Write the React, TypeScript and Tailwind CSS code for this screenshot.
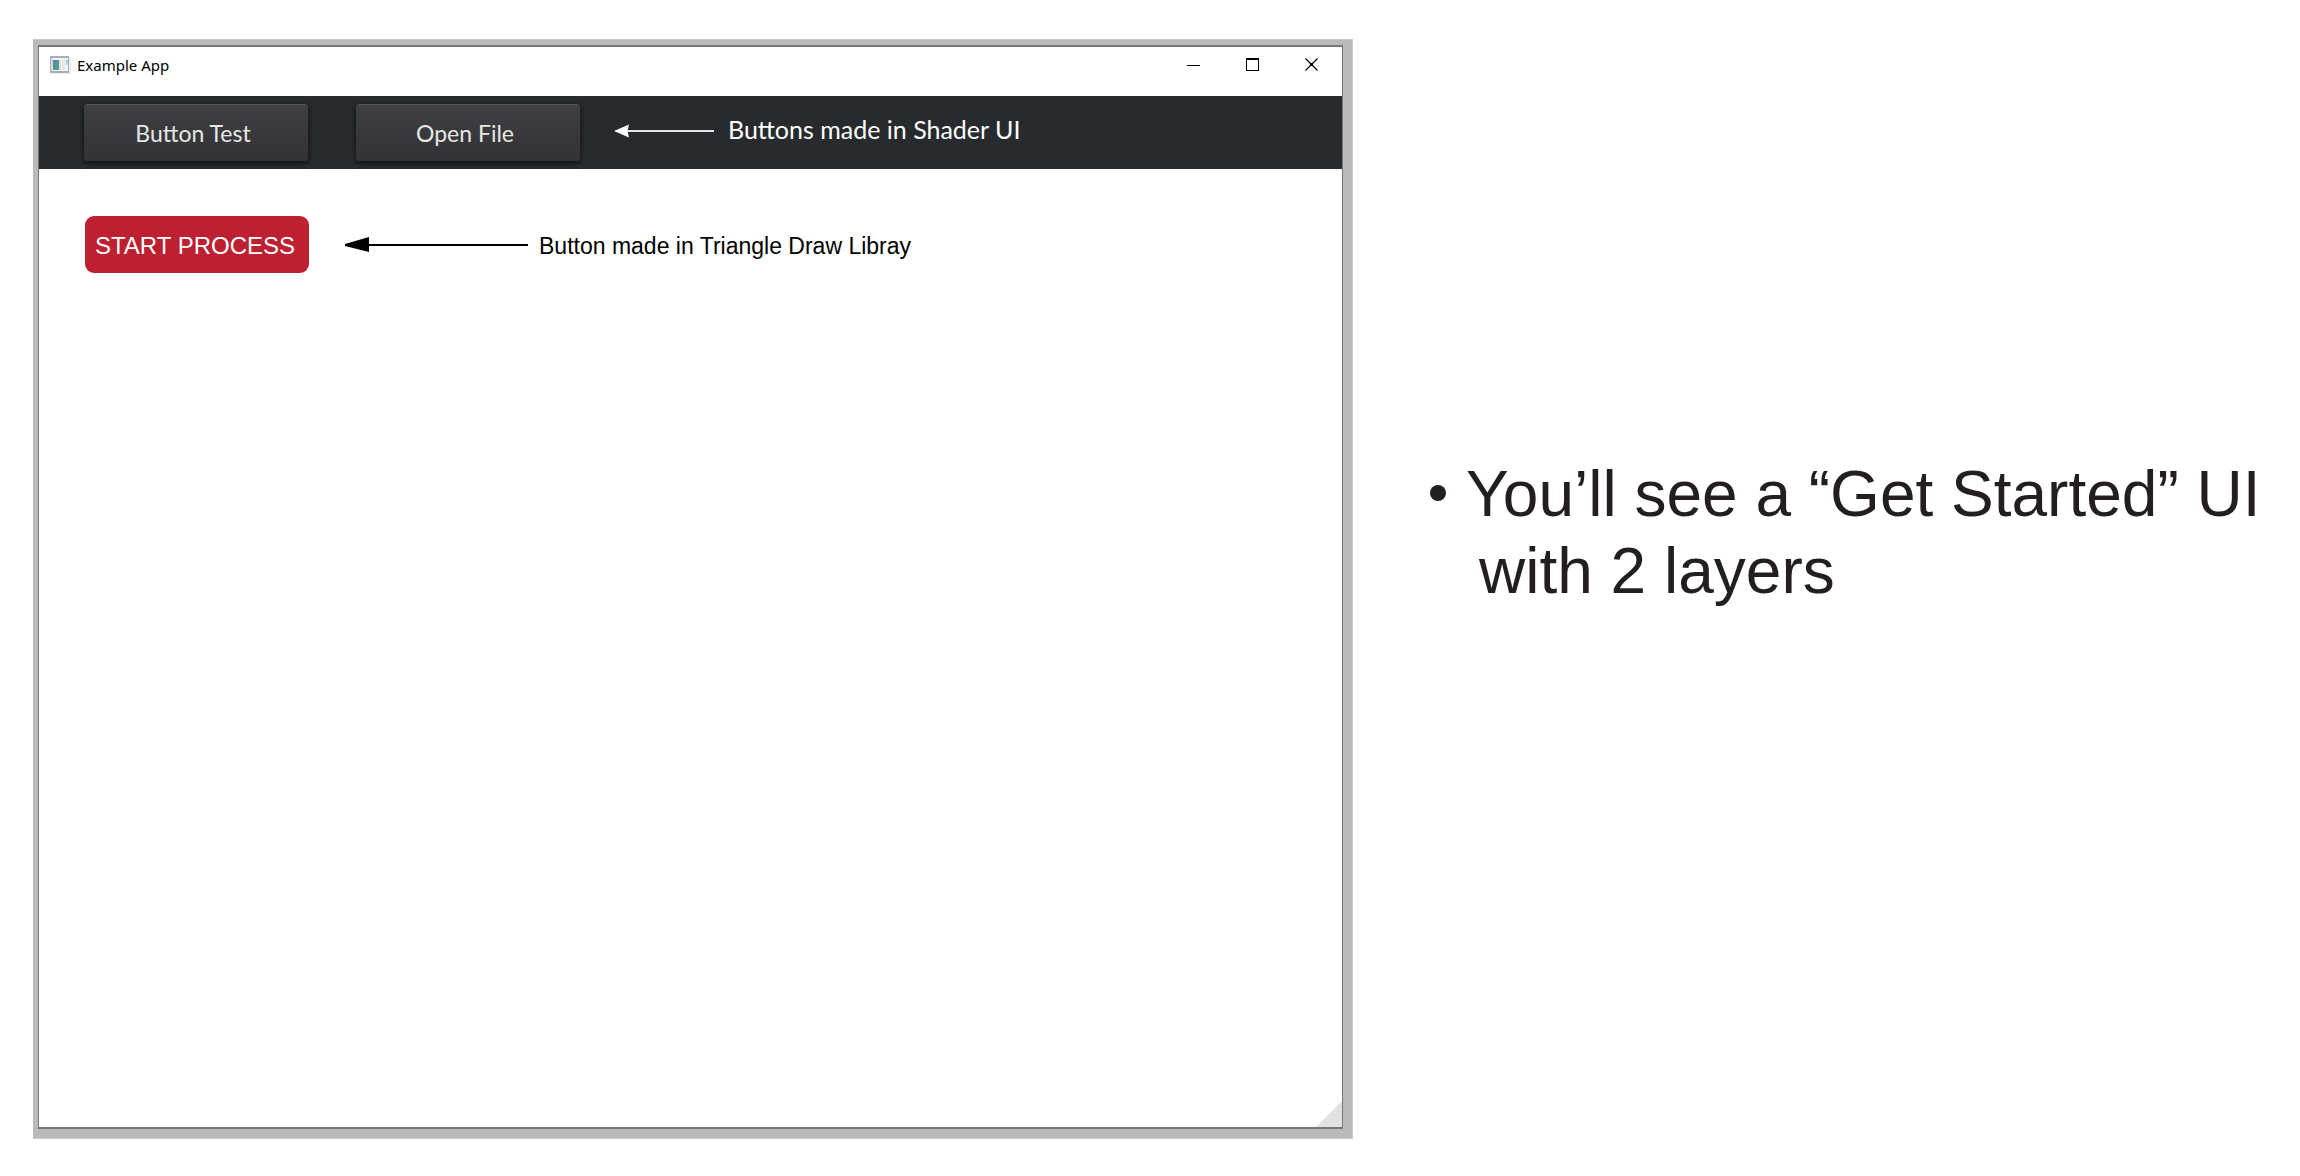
import React from "react";

function AppIcon() {
  return (
    <svg width="21" height="18" viewBox="0 0 21 18" aria-hidden="true">
      <defs>
        <linearGradient id="pane" x1="0" y1="0" x2="1" y2="1">
          <stop offset="0" stopColor="#5b7fb0" />
          <stop offset="1" stopColor="#4fae7c" />
        </linearGradient>
        <linearGradient id="side" x1="0" y1="0" x2="1" y2="1">
          <stop offset="0" stopColor="#7db8a0" />
          <stop offset="1" stopColor="#e4eaf2" />
        </linearGradient>
      </defs>
      <rect x="1" y="1" width="20" height="17" fill="#ececec" />
      <rect x="0" y="0" width="19" height="17" fill="#a9adb5" />
      <rect x="1" y="2" width="17" height="13" fill="#f3f4f6" />
      <rect x="1" y="2" width="2" height="13" fill="#d5dcea" />
      <rect x="3" y="4" width="6" height="10" fill="url(#pane)" />
      <rect x="9" y="4" width="2" height="10" fill="#d8e6e2" />
      <rect x="12" y="4" width="3" height="10" fill="#e6e6e6" />
      <rect x="16" y="4" width="2" height="5" fill="url(#side)" />
    </svg>
  );
}

function TitleBar() {
  return (
    <header className="flex h-[49px] items-start justify-between pl-[11px] pr-6 pt-2">
      <div className="flex items-center gap-1.5">
        <AppIcon />
        <h1 className="font-['Noto_Sans',sans-serif] text-[15px] leading-5 text-black">Example App</h1>
      </div>
      <div className="flex items-center gap-[46px] pt-[3px]">
        <button type="button" aria-label="Minimize" className="block">
          <svg width="13" height="13" viewBox="0 0 13 13">
            <rect y="7" width="13" height="1" fill="#000" />
          </svg>
        </button>
        <button type="button" aria-label="Maximize" className="block">
          <svg width="13" height="13" viewBox="0 0 13 13">
            <path d="M0 0H13V13H0ZM1 2V12H12V2Z" fill="#000" fillRule="evenodd" />
          </svg>
        </button>
        <button type="button" aria-label="Close" className="block">
          <svg width="13" height="13" viewBox="0 0 13 13">
            <path d="M0.5 0.5L12.5 12.5M12.5 0.5L0.5 12.5" stroke="#000" strokeWidth="1.2" />
            <rect x="5" y="5" width="3" height="3" fill="#000" />
          </svg>
        </button>
      </div>
    </header>
  );
}

function ShaderButton({ children }: { children: React.ReactNode }) {
  return (
    <button
      type="button"
      className="h-[57px] w-56 shrink-0 rounded border-t border-[#54565b] bg-linear-to-b from-[#3f4044] to-[#333236] pr-1.5 font-['Lato',sans-serif] text-[23px] text-[#e6e8e2] shadow-[0_2px_5px_1px_rgba(0,0,0,0.55)]"
    >
      {children}
    </button>
  );
}

export default function App() {
  return (
    <main className="grid min-h-screen grid-cols-[1320fr_947fr] bg-white pb-[37px] pl-[33px] pt-[39px]">
      <section className="flex border-t border-r border-b border-[#cbcbcb] bg-[#bababa] pb-[9px] pl-[5px] pr-[9px] pt-[5px]">
        <div className="relative flex-1 border-x border-y-2 border-[#777] bg-white">
          <TitleBar />
          <div className="flex h-[73px] items-center bg-[#282b2e] pl-[45px]">
            <div className="flex gap-12">
              <ShaderButton>Button Test</ShaderButton>
              <ShaderButton>Open File</ShaderButton>
            </div>
            <div className="mb-2 ml-[34px] flex items-center gap-3.5 text-white">
              <svg width="100" height="14" viewBox="0 0 100 14" className="mt-1 shrink-0" aria-hidden="true">
                <path d="M0 7L15 0.500L13.500 7L15 13.500Z" fill="#fff" />
                <rect x="13" y="6" width="87" height="2" fill="#e4e4e4" />
              </svg>
              <span className="whitespace-nowrap font-['Lato',sans-serif] text-[25px] leading-8">
                Buttons made in Shader UI
              </span>
            </div>
          </div>
          <div className="flex items-center pl-[46px] pt-[47px] font-['Liberation_Sans',Arial,sans-serif] text-[23px]">
            <button type="button" className="h-[57px] w-56 shrink-0 whitespace-nowrap rounded-[9px] bg-[#bc2031] pr-1 pt-0.5 text-2xl text-white">
              START PROCESS
            </button>
            <svg width="183" height="15" viewBox="0 0 183 15" className="ml-9 shrink-0" aria-hidden="true">
              <path d="M0 7L24 0V15L0 9Z" fill="#000" />
              <rect x="20" y="7" width="163" height="2" fill="#000" />
            </svg>
            <span className="ml-[11px] whitespace-nowrap pt-0.5 leading-8 text-black">Button made in Triangle Draw Libray</span>
          </div>
          <svg width="26" height="26" viewBox="0 0 26 26" className="absolute bottom-0 right-0" aria-hidden="true">
            <path d="M26 0V26H0Z" fill="#e1e1e1" />
          </svg>
        </div>
      </section>
      <aside className="pl-[77px] pt-[417px] font-['Liberation_Sans',Arial,sans-serif] text-[64px] leading-[77px] text-[#231f20]">
        <ul>
          <li className="flex gap-5">
            <span aria-hidden="true" className="mt-[29px] size-4 shrink-0 rounded-full bg-[#231f20]" />
            <p className="whitespace-nowrap">
              You’ll see a “Get Started” UI
              <span className="block pl-[13px]">with 2 layers</span>
            </p>
          </li>
        </ul>
      </aside>
    </main>
  );
}
